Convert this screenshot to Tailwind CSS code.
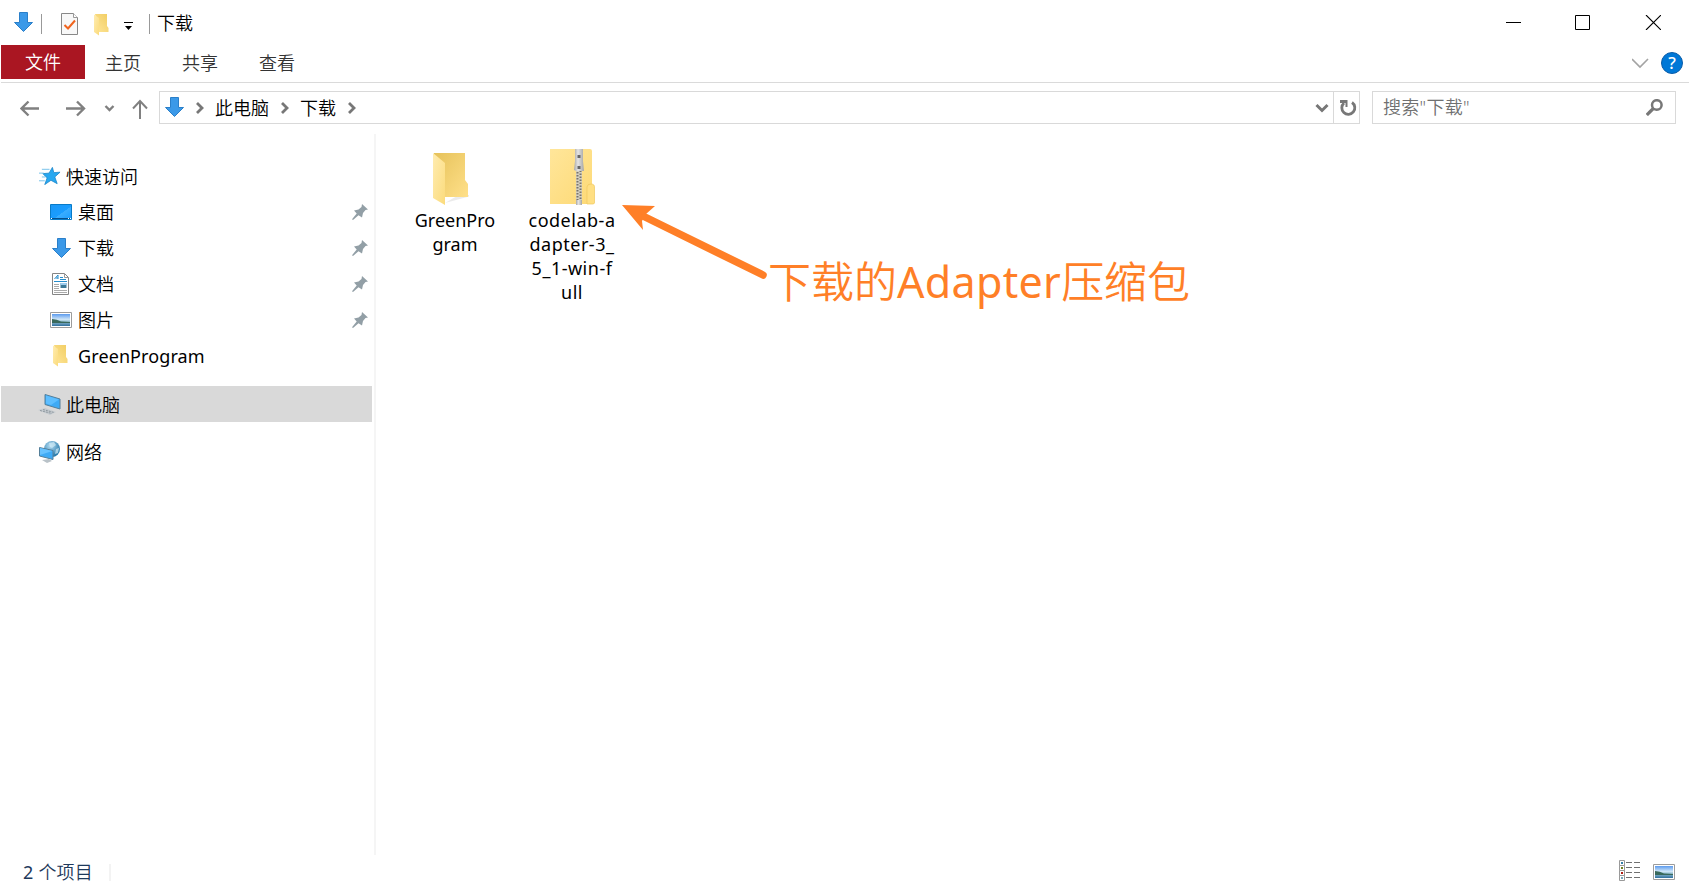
<!DOCTYPE html>
<html lang="zh-CN">
<head>
<meta charset="utf-8">
<title>下载</title>
<script src="https://cdn.jsdelivr.net/npm/@tailwindcss/browser@4"></script>
</head>
<body class="w-[1689px] h-[891px] overflow-hidden bg-white text-black text-[18px] leading-6 font-['Noto_Sans','Noto_Sans_CJK_SC',sans-serif]">
<svg class="absolute w-0 h-0">
  <defs>
    <linearGradient id="fold" x1="0" y1="1" x2="1" y2="0"><stop offset="0" stop-color="#ffe699"/><stop offset="1" stop-color="#f1cd62"/></linearGradient>
    <linearGradient id="flap" x1="0" y1="0" x2="1" y2="1"><stop offset="0" stop-color="#ffecb0"/><stop offset="1" stop-color="#fbdb7c"/></linearGradient>
    <linearGradient id="back" x1="0" y1="0" x2="1" y2="1"><stop offset="0" stop-color="#e6c25a"/><stop offset="1" stop-color="#ffe08a"/></linearGradient>
    <linearGradient id="zipf" x1="0" y1="0" x2="1" y2="1"><stop offset="0" stop-color="#ffe69a"/><stop offset="1" stop-color="#fdd975"/></linearGradient>
    <linearGradient id="sky" x1="0" y1="0" x2="0" y2="1"><stop offset="0" stop-color="#5c9bee"/><stop offset=".45" stop-color="#cfe6f8"/><stop offset=".6" stop-color="#9cc4d4"/><stop offset="1" stop-color="#2f6f9e"/></linearGradient>
    <linearGradient id="metal" x1="0" y1="0" x2="1" y2="0"><stop offset="0" stop-color="#a8a8a8"/><stop offset=".4" stop-color="#e4e4e4"/><stop offset="1" stop-color="#a5a5a5"/></linearGradient>
    <linearGradient id="blue" x1="0" y1="0" x2="1" y2="1"><stop offset="0" stop-color="#1a97f5"/><stop offset=".55" stop-color="#1a9dff"/><stop offset=".56" stop-color="#3aadff"/><stop offset="1" stop-color="#1a9dff"/></linearGradient>
    <radialGradient id="globe" cx=".4" cy=".3" r=".7"><stop offset="0" stop-color="#b4dcf3"/><stop offset="1" stop-color="#2377a8"/></radialGradient>
    <pattern id="teeth" x="27" y="20" width="6" height="3" patternUnits="userSpaceOnUse"><rect width="6" height="3" fill="#d5d0c0"/><rect width="2" height="1.500" x=".5" fill="#77736a"/><rect x="3.500" y="1.500" width="2" height="1.500" fill="#77736a"/></pattern>
    <symbol id="down" viewBox="0 0 19 20"><path d="M5.500.500h8v10h5L9.500 19.500.500 10.500h5z" fill="#3b99e8" stroke="#2a7fc9"/></symbol>
    <symbol id="folder" viewBox="0 0 15 22"><path d="M1 0h12v12l1.500 2v4H5z" fill="url(#fold)"/><path d="M0 .5 5 4v17.500L0 18z" fill="url(#flap)"/></symbol>
    <symbol id="photo" viewBox="0 0 22 16"><path d="M.5.500h21v15H.5z" fill="#fff" stroke="#9c9c9c"/><path d="M2 2h18v12H2z" fill="url(#sky)"/><path d="M2 7q5 0 9 2.500l9 .5v1H2z" fill="#39695b"/></symbol>
    <symbol id="pin" viewBox="0 0 16 16"><path d="M10 0 16 5.500 13.500 6 11 9 10 13.500 6.500 11.200 1 16 0 15.200 4.700 9.500 2 6.500 6.500 5.500 9.500 3z" fill="#929fa6"/></symbol>
  </defs>
</svg>

<div class="flex flex-col w-full h-full">
  <!-- Title bar -->
  <header class="flex h-[45px] shrink-0 items-start pl-[14px]">
    <svg class="mt-3 w-[19px] h-5"><use href="#down"/></svg>
    <div class="ml-[8px] mt-[14px] w-px h-5 bg-[#999]"></div>
    <svg class="ml-[19px] mt-[13px] w-[17px] h-[22px]" viewBox="0 0 17 22"><path d="M.5.500h12L16.500 4.500v17H.5z" fill="#f8f8f8" stroke="#888"/><path d="M12.500.500v4h4" fill="#fff" stroke="#999"/><path d="m3.500 12 3.500 3.500 7-8" fill="none" stroke="#f0641e" stroke-width="2"/></svg>
    <svg class="ml-4 mt-[14px] w-[15px] h-[22px]"><use href="#folder"/></svg>
    <svg class="ml-[15px] mt-[22px] w-[9px] h-2" viewBox="0 0 9 8"><path d="M0 0h9v1H0zM1 4h7L4.500 8z"/></svg>
    <div class="ml-4 mt-[14px] w-px h-5 bg-[#999]"></div>
    <div class="ml-[7px] mt-[11px] font-[350]">下载</div>
    <svg class="ml-auto mr-[28px] mt-[15px] w-[155px] h-[15px]" viewBox="0 0 155 15" fill="none" stroke="#000"><path d="M0 7.500h15M69.500.500h14v14h-14z"/><path d="m140 0 15 15m0-15-15 15" stroke-width="1.100"/></svg>
  </header>

  <!-- Ribbon tabs -->
  <nav class="flex h-[38px] shrink-0 ml-px border-b border-[#dadada] font-[350] text-[#333]">
    <div class="w-[84px] h-[34px] bg-[#aa1622] text-white text-center leading-[35px]">文件</div>
    <div class="ml-5 leading-[37px]">主页</div>
    <div class="ml-[41px] leading-[37px]">共享</div>
    <div class="ml-[41px] leading-[37px]">查看</div>
    <svg class="ml-auto mt-[7px] mr-[6px] w-[51px] h-[22px]" viewBox="0 0 51 22"><path d="m0 7 8 8 8-8" fill="none" stroke="#a3a3a3" stroke-width="1.600"/><circle cx="40" cy="11" r="10.500" fill="#0078d7" stroke="#0a5ca8"/><text x="40" y="17" text-anchor="middle" font-size="17" font-weight="500" fill="#fff">?</text></svg>
  </nav>

  <!-- Address row -->
  <div class="flex h-[51px] shrink-0 pt-2">
    <svg class="ml-5 mt-2 w-[128px] h-5 shrink-0" viewBox="0 0 128 20" fill="none" stroke="#808080" stroke-width="2.400"><path d="M19 9.500H1.500M8.500 2.500l-7 7 7 7M46 9.500h17.500M57 2.500l7 7-7 7"/><path d="m85.500 7 4 4 4-4"/><path d="M120 20V2.500M113 9.500l7-7.500 7 7.500" stroke-width="2"/></svg>
    <div class="ml-[11px] w-[1201px] h-[33px] border border-[#d9d9d9] flex items-center font-[350]">
      <svg class="ml-[5px] mb-[2px] w-[19px] h-5"><use href="#down"/></svg>
      <svg class="ml-[11px] w-[9px] h-3" viewBox="0 0 9 12"><path d="m2 1 5 5-5 5" fill="none" stroke="#777" stroke-width="2.800"/></svg>
      <span class="ml-[11px]">此电脑</span>
      <svg class="ml-[11px] w-[9px] h-3" viewBox="0 0 9 12"><path d="m2 1 5 5-5 5" fill="none" stroke="#777" stroke-width="2.800"/></svg>
      <span class="ml-[11px]">下载</span>
      <svg class="ml-[11px] w-[9px] h-3" viewBox="0 0 9 12"><path d="m2 1 5 5-5 5" fill="none" stroke="#777" stroke-width="2.800"/></svg>
      <svg class="ml-auto w-[14px] h-[10px]" viewBox="0 0 14 10"><path d="m1.500 2 5.500 5.500L12.500 2" fill="none" stroke="#777" stroke-width="3"/></svg>
      <div class="ml-1 w-[26px] h-full border-l border-[#d9d9d9] flex items-center justify-center">
        <svg class="ml-[3px] mt-px w-[17px] h-[17px]" viewBox="0 0 17 17"><path d="M12 2.500A6.500 6.500 0 1 1 4 3" fill="none" stroke="#777" stroke-width="2.800"/><path d="M0 0h7.500v7H5.500V3H0z" fill="#777"/></svg>
      </div>
    </div>
    <div class="ml-[12px] w-[304px] h-[33px] border border-[#d9d9d9] flex items-center justify-between pl-[10px] pr-3 font-[350] text-[#707070]">
      <span class="-mt-px tracking-[.3px]">搜索"下载"</span>
      <svg class="w-[17px] h-[17px]" viewBox="0 0 17 17" fill="none" stroke="#777"><circle cx="10.800" cy="6" r="4.800" stroke-width="2.500"/><path d="m7.300 9.500-6.500 6.500" stroke-width="3.200"/></svg>
    </div>
  </div>

  <main class="flex h-[721px] shrink-0">
    <!-- Navigation pane -->
    <aside class="w-[376px] shrink-0 border-r-2 border-[#f5f5f5] pt-6 pl-px pr-[2px] font-[350]">
      <div class="h-9 flex items-center pl-[38px]">
        <svg class="w-[22px] h-[18px]" viewBox="0 0 23 18"><path d="M14 0 15.500 5.500 22 5 16.500 10 19 17 12.500 13.500 6 18 8.500 11 4 6.500 10.500 6z" fill="#28a8f0" stroke="#1482c8" stroke-width=".8"/><path d="M3 2h8M0 6h5M3 10h4M0 14h6" stroke="#72c0ea"/></svg>
        <span class="ml-[5px] mt-px">快速访问</span>
      </div>
      <div class="h-9 flex items-center pl-[49px] pr-1">
        <svg class="w-[22px] h-4" viewBox="0 0 22 16"><path d="M.5.500h21v15H.5z" fill="url(#blue)" stroke="#087bc8"/><path d="M1 14h20v1H1z" fill="#07508c"/><path d="M1 14h1v1H1zM18 14h1v1h-1zM20 14h1v1h-1z" fill="#fff"/></svg>
        <span class="ml-[6px]">桌面</span>
        <svg class="ml-auto w-4 h-4"><use href="#pin"/></svg>
      </div>
      <div class="h-9 flex items-center pl-[50.5px] pr-1">
        <svg class="w-[19px] h-5"><use href="#down"/></svg>
        <span class="ml-[7.5px]">下载</span>
        <svg class="ml-auto w-4 h-4"><use href="#pin"/></svg>
      </div>
      <div class="h-9 flex items-center pl-[51px] pr-1">
        <svg class="w-[17px] h-[22px]" viewBox="0 0 17 22"><path d="M.5.500h12L16.500 4.500v17H.5z" fill="#fff" stroke="#858585"/><path d="M12.500.500v4h4" fill="none" stroke="#999"/><path d="M2.500 6 6 2v4M4 5h2M8 4.500h3M8 6.500h6M2 8.500h13" fill="none" stroke="#268dcc"/><path d="M2 11.500h5M2 13.500h5M2 15.500h5M2 17.500h13M2 19.500h13" stroke="#aaa"/><path d="M8.500 10h6v5h-6z" fill="#3e7996"/><path d="M8.500 10h6v2h-6z" fill="#9bcbed"/></svg>
        <span class="ml-[9px]">文档</span>
        <svg class="ml-auto w-4 h-4"><use href="#pin"/></svg>
      </div>
      <div class="h-9 flex items-center pl-[49px] pr-1">
        <svg class="w-[22px] h-4"><use href="#photo"/></svg>
        <span class="ml-[6px]">图片</span>
        <svg class="ml-auto w-4 h-4"><use href="#pin"/></svg>
      </div>
      <div class="h-9 flex items-center pl-[52px]">
        <svg class="w-[15px] h-[22px]"><use href="#folder"/></svg>
        <span class="ml-[10px] -mt-px font-normal tracking-[.1px]">GreenProgram</span>
      </div>
      <div class="mt-3 h-9 flex items-center pl-[37px] bg-[#d9d9d9]">
        <svg class="w-[23px] h-[21px]" viewBox="0 0 23 21"><path d="m7 .5 15 4.500v10L7 10.500z" fill="#3eaaf5" stroke="#557f99"/><path d="m8 1.500 13 4-8 5.500-5-1.500z" fill="#5dbeff"/><path d="m0 16 7-2 11 4-6 3z" fill="#c5cbd0"/><path d="m2 16.500 12 3M5 15.500l11 3" stroke="#90999f" stroke-dasharray="2 1"/></svg>
        <span class="ml-[5px] mt-px">此电脑</span>
      </div>
      <div class="mt-3 h-9 flex items-center pl-[38px]">
        <svg class="w-[22px] h-[22px]" viewBox="0 0 22 22"><circle cx="13" cy="8" r="8" fill="url(#globe)"/><path d="m10 2 5-1 2 3-4 3-2-1zM17 8l3-1-1 5-3 1z" fill="#d0ebf7" opacity=".7"/><path d="m.5 6.500 13.500 3v9L.5 15z" fill="#3eaaf5" stroke="#557f99"/><path d="m1 7 12.500 3L1 14z" fill="#67c2ff"/><path d="m3 19 7-1 3 2-5 2z" fill="#b9c2c8"/></svg>
        <span class="ml-[5px]">网络</span>
      </div>
    </aside>

    <!-- File area -->
    <section class="relative flex grow pt-[14px] pl-[29px]">
      <div class="w-[100px] flex flex-col items-center">
        <div class="h-[60px] flex items-start">
          <svg class="mt-[5px] -ml-[8px] w-[36px] h-[52px]" viewBox="0 0 36 52"><path d="M24 43 36 42v1.500L12 50z" fill="#ddd" opacity=".6"/><path d="M1 0h31v27l3 4v13H1z" fill="url(#back)"/><path d="M0 0 12 10v42L0 45z" fill="url(#flap)"/></svg>
        </div>
        <div class="text-center">GreenPro<br>gram</div>
      </div>
      <div class="ml-[17px] w-[100px] flex flex-col items-center">
        <div class="h-[60px] flex items-start">
          <svg class="mt-px -ml-px w-[46px] h-[56px]" viewBox="0 0 46 56"><path d="M1 0h40q2 0 2 2v34l2 2v16q0 1-1 1H1z" fill="url(#zipf)"/><path d="M38 55V38q0-3 4-3t3.500 4v15l-1 1z" fill="#ffdf83" stroke="#efc85e" stroke-width=".7"/><path d="M27 20h6v31h-6z" fill="url(#teeth)"/><path d="M26 0h8v12l1 10h-8l-2-1 1-9z" fill="url(#metal)"/><path d="M28.500 6h3v3h-3zM28.500 17h3v3h-3z" fill="#666"/><path d="M27 51h6v5h-6z" fill="url(#metal)"/></svg>
        </div>
        <div class="text-center tracking-[.5px]">codelab-a<br>dapter-3_<br>5_1-win-f<br>ull</div>
      </div>
      <!-- Annotation over the file area -->
      <svg class="absolute left-[246px] top-[70px] w-[146px] h-[78px]" viewBox="0 0 146 78"><path d="M0 1 33 2 24 10 20 17 21 26z" fill="#ff7f27"/><path d="m23 13 118 58" stroke="#ff7f27" stroke-width="7.500" stroke-linecap="round"/></svg>
      <div class="absolute left-[392px] top-[118px] text-[43px] leading-[60px] whitespace-nowrap text-[#ff7f27] font-[350]">下载的<span class="font-normal tracking-[.3px]">Adapter</span>压缩包</div>
    </section>
  </main>

  <footer class="flex h-9 items-start pl-[23px] pr-[14px] text-[#1e395b]">
    <div class="mt-[5px] font-[350] tracking-[.2px]"><span class="font-normal">2</span> 个项目</div>
    <div class="ml-[16px] mt-[9px] w-[2px] h-[17px] bg-[#f3f3f3]"></div>
    <svg class="ml-auto mt-[5px] w-[21px] h-[21px]" viewBox="0 0 21 21"><path d="M.5.500h5v5h-5zM.5 5.500h5v5h-5zM.5 10.500h5v5h-5zM.5 15.500h5v5h-5z" fill="#fff" stroke="#999"/><path d="M2 2h2v2H2z" fill="#347fa8"/><path d="M2 7h2v2H2z" fill="#708020"/><path d="M2 12h2v2H2z" fill="#b21c12"/><path d="M2 17h2v2H2z" fill="#75a5ba"/><path d="M7 2.500h6m2 0h6M7 7.500h6m2 0h6M7 12.500h6m2 0h6M7 17.500h6m2 0h6" stroke="#707070"/></svg>
    <svg class="ml-[13px] mt-[9px] w-[22px] h-4"><use href="#photo"/></svg>
  </footer>
</div>
</body>
</html>
